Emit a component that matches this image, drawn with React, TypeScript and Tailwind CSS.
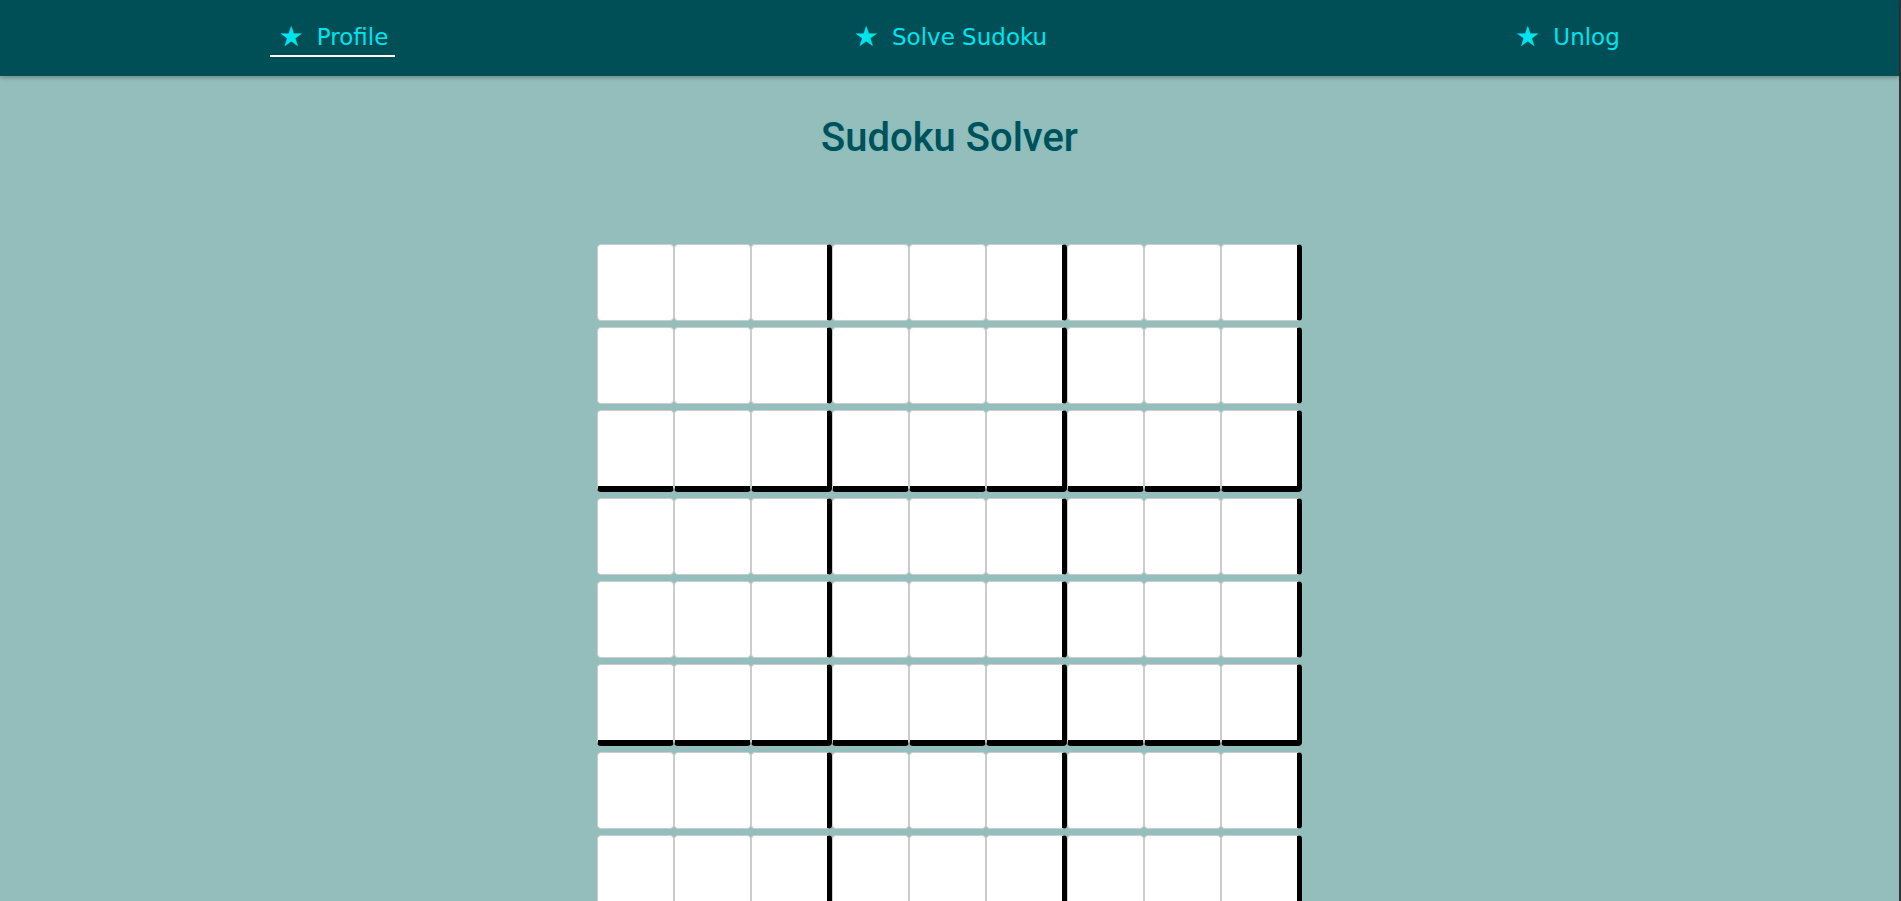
const NAV_ITEMS = [
  { label: "Profile", active: true },
  { label: "Solve Sudoku", active: false },
  { label: "Unlog", active: false },
];

const ROWS = Array.from({ length: 9 }, (_, r) => r);
const COLS = Array.from({ length: 9 }, (_, c) => c);

function cellClass(row: number, col: number) {
  const thickRight = col % 3 === 2;
  const thickBottom = row % 3 === 2;
  return [
    "h-[77px] w-[77px] rounded-[4px] border border-[#cccccc] bg-white outline-none",
    thickRight ? "w-[81px] border-r-[5px] border-r-black" : "",
    thickBottom ? "h-[82px] border-b-[6px] border-b-black" : "",
  ].join(" ");
}

function NavBar() {
  return (
    <header className="h-[76px] bg-[#014f56] shadow-[0_2px_4px_rgba(0,0,0,0.25)]">
      <nav className="grid h-full grid-cols-3 px-[24px]">
        {NAV_ITEMS.map((item) => (
          <div key={item.label} className="flex items-center justify-center">
            <a
              href="#"
              className={`mt-[4px] flex items-center gap-[13px] pl-[9px] pr-[7px] pb-[4px] text-[23px] leading-[28px] text-[#00e4ee] ${
                item.active ? "border-b-2 border-white" : "border-b-2 border-transparent"
              }`}
              style={{ fontFamily: "'Comic Sans MS', 'DejaVu Sans', sans-serif" }}
            >
              <span className="text-[28px] leading-[28px]">★</span>
              <span>{item.label}</span>
            </a>
          </div>
        ))}
      </nav>
    </header>
  );
}

export default function App() {
  return (
    <div className="min-h-[901px] border-r-2 border-[#333333] bg-[#93bebb]">
      <NavBar />
      <main className="flex flex-col items-center">
        <h1
          className="mt-[32px] text-[40px] font-medium text-[#01505a] [text-shadow:0_0_2px_rgba(0,230,238,0.35)]"
          style={{ fontFamily: "Roboto, 'Noto Sans', sans-serif" }}
        >
          Sudoku Solver
        </h1>
        <div className="mt-[76px] flex flex-col gap-[6px] pb-10">
          {ROWS.map((r) => (
            <div key={r} className="flex">
              {COLS.map((c) => (
                <input
                  key={c}
                  type="text"
                  maxLength={1}
                  className={cellClass(r, c)}
                />
              ))}
            </div>
          ))}
        </div>
      </main>
    </div>
  );
}
